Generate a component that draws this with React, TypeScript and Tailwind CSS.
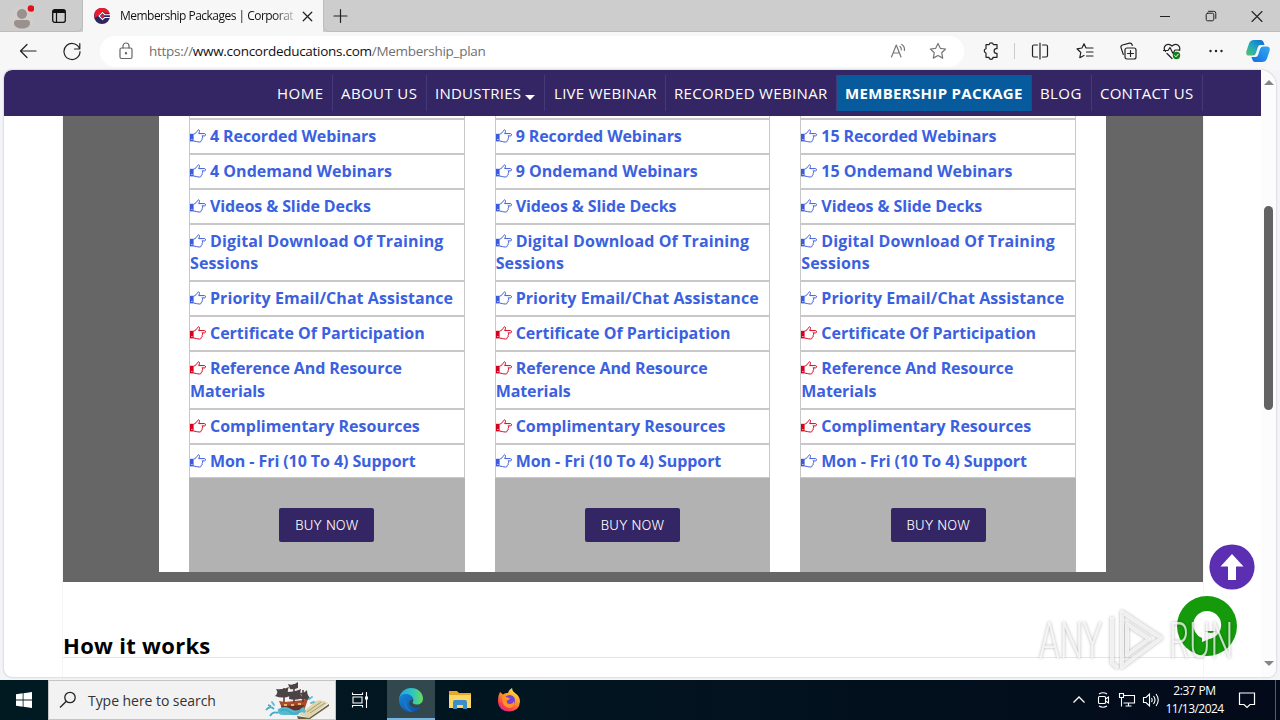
import type { ReactNode } from "react";

const navItems = [
  { label: "HOME", box: "w-[65px] pl-[9px] tracking-[0.5px]" },
  { label: "ABOUT US", box: "w-[94px] pl-2 tracking-[0.4px]" },
  { label: "INDUSTRIES", box: "w-[118px] pl-2 tracking-[0.25px]", caret: true },
  { label: "LIVE WEBINAR", box: "w-[121px] pl-[9px] tracking-[0.3px]" },
  { label: "RECORDED WEBINAR", box: "w-[171px] pl-2 tracking-[0.35px]" },
  { label: "MEMBERSHIP PACKAGE", box: "w-[195px] pl-2 tracking-[0.32px]", active: true },
  { label: "BLOG", box: "w-[60px] pl-[8px] tracking-[0.4px]" },
  { label: "CONTACT US", box: "w-[111px] pl-2 tracking-[0.25px]" },
];

const plans = [4, 9, 15];

const featuresFor = (count: number) => [
  { text: `${count} Recorded Webinars`, red: false, spacing: "tracking-[-0.1px]" },
  { text: `${count} Ondemand Webinars`, red: false, spacing: "tracking-[0.02px]" },
  { text: "Videos & Slide Decks", red: false, spacing: "tracking-[-0.1px]" },
  { text: "Digital Download Of Training Sessions", red: false, spacing: "tracking-[0.12px]" },
  { text: "Priority Email/Chat Assistance", red: false, spacing: "tracking-[0.06px]" },
  { text: "Certificate Of Participation", red: true, spacing: "tracking-[-0.02px]" },
  { text: "Reference And Resource Materials", red: true, spacing: "tracking-[-0.09px]" },
  { text: "Complimentary Resources", red: true, spacing: "tracking-[0px]" },
  { text: "Mon - Fri (10 To 4) Support", red: false, spacing: "tracking-[-0.08px]" },
];

function Hand({ red }: { red: boolean }) {
  return (
    <svg
      viewBox="0 0 16 14"
      className={`mr-1 inline-block h-[14px] w-4 align-[-1px] ${red ? "text-[#d5001c]" : "text-[#3c5bdc]"}`}
      fill="none"
      stroke="currentColor"
      strokeWidth="1"
      strokeLinejoin="round"
    >
      <rect x="0" y="4.8" width="3.6" height="7.6" fill="currentColor" stroke="none" />
      <path d="M3.5 5.2 C5.5 4.8 6.6 3.2 7.6 1.5 C8.5 .2 9.8 1 9.5 2.5 L8.7 4.6 H14.6 C15.8 4.6 15.8 6.9 14.6 6.9 H11.9 C13 7.5 12.8 9 12 9.3 C12.6 10.3 12 11.2 11.2 11.4 C11.4 12.6 10.5 13 9.5 13 C7 13 5.6 12.2 3.5 12" />
      <rect x="1.4" y="10" width="1" height="1" fill="#fff" stroke="none" />
    </svg>
  );
}

function Icon({ children, className = "h-5 w-5", color = "#222" }: { children: ReactNode; className?: string; color?: string }) {
  return (
    <svg viewBox="0 0 20 20" className={`shrink-0 ${className}`} fill="none" stroke={color} strokeWidth="1.2" strokeLinecap="round" strokeLinejoin="round">
      {children}
    </svg>
  );
}

function TabStrip() {
  return (
    <div className="flex h-8 bg-[#cdcdcd]">
      <div className="flex w-[83px] items-center rounded-br-md border-r border-b border-[#bcbcbc]">
        <svg viewBox="0 0 24 28" className="ml-[10px] h-7 w-6 shrink-0">
          <circle cx="12" cy="15" r="12" fill="#d1cecc" />
          <circle cx="12" cy="12" r="5" fill="#99918d" />
          <path d="M4 21q0-3 3-3h10q3 0 3 3c0 4-4 5.500-8 5.500S4 25 4 21z" fill="#99918d" />
          <circle cx="21" cy="6.500" r="3.300" fill="#e0101c" />
        </svg>
        <svg viewBox="0 0 14 14" className="ml-[18px] h-[14px] w-[14px] shrink-0" fill="none" stroke="#111">
          <rect x=".7" y=".7" width="12.6" height="12.6" rx="2" strokeWidth="1.3" />
          <path d="M1 2.5h12" strokeWidth="3" />
          <path d="M4.5 3v10" strokeWidth="1.2" />
        </svg>
      </div>
      <div className="flex w-60 items-center bg-[#f7f7f7] pl-[11px]">
        <svg viewBox="0 0 16 16" className="h-4 w-4 shrink-0">
          <circle cx="8" cy="8" r="8" fill="#302560" />
          <path d="M.6 5A8 8 0 0 1 15.600 5.300H11.500L8.500 3.200 4 8 .3 10z" fill="#ec1b2e" />
          <path d="M16 6.300H11.200L8.500 3.700 4.300 8l4.200 4.300 2.500-2.300H15.700L15.900 9H10.400L8.500 10.800 5.900 8l2.600-2.700 1.900 1.900H16z" fill="#fff" />
          <circle cx="8.600" cy="8" r="1.700" fill="#ec1b2e" />
        </svg>
        <div className="ml-[10px] w-[179px] whitespace-nowrap text-[12px] tracking-[-0.52px] text-[#111] [mask-image:linear-gradient(90deg,#000_86%,transparent)]">
          Membership Packages | Corporat
        </div>
        <Icon className="h-[17px] w-[17px]"><path d="M5 5l10 10M15 5L5 15" strokeWidth="1.5" /></Icon>
      </div>
      <div className="flex flex-1 items-center rounded-bl-md border-b border-l border-[#bcbcbc]">
        <Icon className="ml-[7px] h-5 w-5"><path d="M9.500 3.500v13M3 10h13" /></Icon>
        <div className="ml-auto flex">
          <div className="flex w-[46px] justify-center"><Icon className="h-5 w-5"><path d="M5 10.5h10" strokeLinecap="butt" strokeWidth="1" /></Icon></div>
          <div className="flex w-[46px] justify-center"><Icon><rect x="5.2" y="7.2" width="7.6" height="7.6" rx="1.5" strokeWidth="1" /><path d="M7.5 5.3h5.3q2 0 2 2v5.2" strokeWidth="1" /></Icon></div>
          <div className="flex w-[46px] justify-center"><Icon><path d="M5 5.5l10 10M15 5.5l-10 10" strokeWidth="1.1" /></Icon></div>
        </div>
      </div>
    </div>
  );
}

function Toolbar() {
  return (
    <div className="flex h-[38px] items-center bg-[#f7f7f7]">
      <Icon className="ml-[18px] h-5 w-5"><path d="M18 10H2.5M9 3.5L2.5 10 9 16.5" /></Icon>
      <Icon className="ml-[24px] h-5 w-5"><path d="M17.6 8A8 8 0 1 0 18 10.5M17.8 2.5V8H12.5" /></Icon>
      <div className="ml-[18px] flex h-[31px] w-[864px] items-center rounded-full bg-white pl-4">
        <Icon color="#666"><rect x="4" y="7" width="12" height="10.5" rx="1.5" /><path d="M7 7V5a3 3 0 0 1 6 0v2" /><circle cx="10" cy="12.2" r=".6" fill="#666" /></Icon>
        <div className="ml-[13px] whitespace-nowrap text-[13.500px] tracking-[-0.28px] text-[#707070]">
          https://<span className="text-[#111]">www.concordeducations.com</span>/Membership_plan
        </div>
        <Icon className="mr-[19px] ml-auto h-5 w-5" color="#777"><path d="M2.5 16L7.3 4 12 16M4.2 12h6.4M11 5.5q1.7 1.6 1.3 3.5M12.7 3.5Q16 5.5 15.4 9.5" /></Icon>
        <Icon className="mr-4 h-5 w-5" color="#777"><path d="M10 2.4l2.3 4.9 5.3.7-3.9 3.7 1 5.4-4.7-2.6-4.7 2.6 1-5.4L2.4 8l5.3-.7z" /></Icon>
      </div>
      <Icon className="ml-[17px] h-5 w-5"><path d="M5 3.7h3.1a2.2 2.2 0 0 1 4.300 0H16v4h-.6a2.200 2.200 0 1 0 0 4.600h.6v4h-4a2 2 0 0 1-4 0H5v-4.300a2.200 2.200 0 0 1 0-4.300z" /></Icon>
      <div className="ml-[13px] h-4 w-px bg-[#ccc]" />
      <Icon className="ml-[15px] h-5 w-5"><path d="M10 2v16M7.5 4H4q-1.5 0-1.5 1.5v9Q2.5 16 4 16h3.5M12.5 4H16q1.5 0 1.5 1.5v9q0 1.5-1.5 1.5h-3.5" /></Icon>
      <Icon className="ml-[25px] h-5 w-5"><path d="M12.5 7H11L9 2.8 7 7 2 7.8l3.8 3.7-1 5.2L9 14.5M12.5 7H18M11.5 11H18M11.5 15H18" /></Icon>
      <Icon className="ml-[23px] h-5 w-5"><rect x="7" y="7" width="11" height="11" rx="2" /><path d="M12.5 9.5v6M9.5 12.5h6M5.3 13.5L3 6.6q-.5-2 1.5-2.6l7-1.8q2-.4 2.6 1.5l.2.8" /></Icon>
      <Icon className="ml-[24px] h-5 w-5"><path d="M3.5 10.5Q.8 7 3.7 4.2 7 2 10 5q3-3 6.2-.8 2.6 2.4.9 5.3M5 12.5l5 5M1.5 9.5H6l2-3 3 6 2-3.5h5" /><circle cx="14.5" cy="14.5" r="3.7" fill="#14801c" stroke="none" /><path d="M12.8 14.6l1.2 1.2 2.2-2.5" stroke="#fff" strokeWidth="1" /></Icon>
      <Icon className="ml-[24px] h-5 w-5"><g fill="#222" stroke="none"><circle cx="4.5" cy="10" r="1.2" /><circle cx="10" cy="10" r="1.2" /><circle cx="15.5" cy="10" r="1.2" /></g></Icon>
      <svg viewBox="0 0 24 24" className="ml-5 h-6 w-6">
        <defs>
          <linearGradient id="copilotLeft" x1="0" y1="1" x2="1" y2="0"><stop stopColor="#58c45d" /><stop offset=".45" stopColor="#23aabe" /><stop offset="1" stopColor="#1166dd" /></linearGradient>
          <linearGradient id="copilotRight" x1="0" y1="1" x2="1" y2="0"><stop stopColor="#126fe0" /><stop offset="1" stopColor="#35a8f5" /></linearGradient>
        </defs>
        <path d="M8 1h7q2 0 2.700 2.500L18.500 6h-4q-2 0-2.700 2.300L10 14q-.8 2.500-3 2.500H3q-3.300 0-2.700-4L3 4.500Q4.200 1 8 1z" fill="url(#copilotLeft)" />
        <path d="M16 23H9q-2 0-2.700-2.500L5.500 18h4q2 0 2.700-2.300L14 10q.8-2.500 3-2.500h4q3.300 0 2.700 4L21 19.500Q19.800 23 16 23z" fill="url(#copilotRight)" />
      </svg>
    </div>
  );
}

function SiteNav() {
  return (
    <nav className="flex h-[46px] items-center rounded-tl-lg bg-[#342664] pl-[264px] text-[15px] text-white">
      {navItems.map((item) => (
        <div
          key={item.label}
          className={`flex h-9 shrink-0 items-center whitespace-nowrap border-r border-[#46397a] pt-px ${item.box} ${item.active ? "bg-[#075b9d] font-bold" : ""}`}
        >
          {item.label}
          {item.caret && <span className="mt-[7px] ml-1 border-x-[5px] border-t-[5px] border-x-transparent border-t-white" />}
        </div>
      ))}
    </nav>
  );
}

function Plan({ count }: { count: number }) {
  return (
    <div className="flex flex-col">
      <div className="h-[3px] shrink-0 border-x border-b border-[#c8c8c8]" />
      {featuresFor(count).map((f) => (
        <div key={f.text} className={`shrink-0 border border-[#c8c8c8] py-[5px] text-[16px] leading-[22.857px] font-bold text-[#3b61df] ${f.spacing}`}>
          <Hand red={f.red} />
          {f.text}
        </div>
      ))}
      <div className="flex flex-1 justify-center bg-[#b2b2b2] pt-[30px]">
        <div className="flex h-[34px] w-[95px] items-center justify-center rounded-[2px] bg-[#342664] [font-family:Inter,sans-serif] text-[13px] font-light tracking-[0.1px] text-white">
          BUY NOW
        </div>
      </div>
    </div>
  );
}

function Watermark() {
  return (
    <div className="absolute top-[538px] left-[1035px] flex h-[66px] w-[194px] items-center text-white/75 [filter:drop-shadow(0_0_1.5px_rgba(0,0,0,0.4))]">
      <div className="w-[70px] shrink-0 origin-left scale-x-[0.66] [font-family:Roboto,sans-serif] text-[50px] leading-none font-light">ANY</div>
      <svg viewBox="0 0 56 64" className="h-16 w-14 shrink-0" fill="none" stroke="currentColor" strokeWidth="4" strokeLinejoin="round">
        <path d="M3 8v46l6 5M13 3l39 26-39 29zM18 15l22 15-22 16z" />
      </svg>
      <div className="ml-1 w-[64px] shrink-0 origin-left scale-x-[0.64] [font-family:Roboto,sans-serif] text-[50px] leading-none font-light">RUN</div>
    </div>
  );
}

function Page() {
  return (
    <div className="relative mx-1 flex h-[607px] overflow-hidden rounded-lg rounded-tr-2xl bg-white shadow-[0_0_2px_#aaa]">
      <div className="flex w-[1257px] flex-col">
        <SiteNav />
        <main className="ml-[58px] flex w-[1142px] flex-1 flex-col border-x border-[#f5f5f5]">
          <section className="flex h-[466px] w-[1140px] shrink-0 justify-center bg-[#666] pr-px pb-[10px]">
            <div className="grid w-[947px] grid-cols-3 gap-[30px] bg-white px-[30px]">
              {plans.map((count) => <Plan key={count} count={count} />)}
            </div>
          </section>
          <h2 className="mt-[46px] h-[30px] border-b border-[#e5e5e5] text-[22px] leading-[34px] font-bold tracking-[0.3px] text-black">How it works</h2>
        </main>
      </div>
      <div className="flex w-[15px] flex-col items-center bg-[#fcfcfc] pt-[10px] pb-[11px]">
        <div className="border-x-[5px] border-b-[5px] border-x-transparent border-b-[#858585]" />
        <div className="mt-[121px] h-[204px] w-[9px] rounded-full bg-[#626262]" />
        <div className="mt-auto border-x-[5px] border-t-[5px] border-x-transparent border-t-[#858585]" />
      </div>
      <svg viewBox="0 0 46 46" className="absolute top-[474px] left-[1205px] h-[46px] w-[46px]">
        <circle cx="23" cy="23" r="22.600" fill="#5c2fb2" />
        <path d="M23 10L34.500 22.500H27V36H19V22.500H11.500z" fill="#fff" />
      </svg>
      <svg viewBox="0 0 60 60" className="absolute top-[526px] left-[1173px] h-[60px] w-[60px]">
        <circle cx="30" cy="30" r="30" fill="#149a0b" />
        <path d="M30 15a14 14 0 0 1 3 27.700L25 46v-4A14 14 0 0 1 30 15z" fill="#fff" />
        <path d="M28 35h11q-5 4-11 0z" fill="#149a0b" />
      </svg>
      <Watermark />
    </div>
  );
}

function Ship() {
  return (
    <svg viewBox="0 0 66 38" className="h-[38px] w-[66px]">
      <path d="M35 34L52 20Q57 18 64 22L45 37z" fill="#e0d4ab" />
      <path d="M33 35l12 2 20-14v2L46 38H34z" fill="#6b6041" />
      <path d="M46 32l15-10M43 31l14-10" stroke="#a69b76" />
      <path d="M15 20l6 1 19-2 5-4-5 15q-11 5-21 0z" fill="#a94a2d" />
      <path d="M17 25l23-1-2 6q-11 4-19 0z" fill="#663024" />
      <path d="M20 23h3v2h-3zM27 23h3v2h-3zM34 22h3v2h-3z" fill="#e8b36a" />
      <path d="M20 7v14M30 3v18M39 9v12" stroke="#4d3830" strokeWidth="1.5" />
      <path d="M12 8q7 1 13-2-3 5 1 9-7 3-15 0 4-3 1-7zM23 11q8 0 14-3-2 5 2 9-7 3-14 1 1-4-2-7zM36 12q5 0 7-3 0 6 4 9-6 1-10 0 2-3-1-6zM24 3q5 2 10-2v6q-5 2-8 1z" fill="#4b4344" />
      <path d="M14 28q7-4 13 0t12-2q4 3 2 6-5-2-7 2H20q-8 0-6-6z" fill="#58b9cf" />
      <path d="M16 30q6-3 10 1t10-1M2 29q4-5 8-1M6 35q3-5 8-3M4 24l3 1" stroke="#45abc9" strokeWidth="1.8" fill="none" />
      <path d="M45 18l3-2M47 22l3-1M10 24l-2-3" stroke="#61bfdb" strokeWidth="2" strokeLinecap="round" />
    </svg>
  );
}

function Taskbar() {
  return (
    <div className="flex h-10 bg-linear-to-r from-[#001a22] via-[#021420] to-[#030a1a] text-white">
      <div className="flex w-12 items-center justify-center">
        <svg viewBox="0 0 16 16" className="h-4 w-4" fill="#fff"><path d="M0 2.200L6.700 1.300V7.600H0zM7.500 1.200L16 0V7.600H7.500zM0 8.400H6.700V14.700L0 13.800zM7.500 8.400H16V16L7.500 14.800z" /></svg>
      </div>
      <div className="flex w-72 items-center border border-[#c5c5c5] bg-[#f2f2f2] pl-[10px]">
        <svg viewBox="0 0 18 18" className="h-[18px] w-[18px]" fill="none" stroke="#222" strokeWidth="1.300"><circle cx="11" cy="6.500" r="5.200" /><path d="M7.300 10.200L1 16.500" /></svg>
        <div className="ml-[11px] whitespace-nowrap text-[14px] tracking-[-0.05px] text-[#333]">Type here to search</div>
        <div className="mr-[5px] ml-auto"><Ship /></div>
      </div>
      <div className="flex w-[51px] items-center justify-center pr-1">
        <svg viewBox="0 0 18 18" className="h-[18px] w-[18px]" fill="none" stroke="#fff" strokeWidth="1.100">
          <path d="M1.500 1.500v2h10v-2M1.500 16.500v-2h10v2M2 6h9v6H2zM15.500 1v16" /><path d="M14 5.500h3v3h-3z" fill="#fff" stroke="none" />
        </svg>
      </div>
      <div className="flex w-12 items-center justify-center border-b-2 border-[#76b4e4] bg-[#33474f] pt-px">
        <svg viewBox="0 0 24 24" className="h-6 w-6">
          <defs>
            <linearGradient id="edgeTop"><stop stopColor="#22a4e2" /><stop offset=".55" stopColor="#30c4c4" /><stop offset="1" stopColor="#6bdc57" /></linearGradient>
            <linearGradient id="edgeBottom" x1="0" y1="0" x2="1" y2="1"><stop stopColor="#1787d9" /><stop offset="1" stopColor="#0c4a99" /></linearGradient>
          </defs>
          <path d="M0 11C1 4 6 0 12 0c7 0 12 5 12 10.500 0 4-3 6-6 6s-5-1.200-4.200-2.500c2-3-.8-6-5-6C5 8 1.500 9 0 11z" fill="url(#edgeTop)" />
          <path d="M0 12C0 7 4.500 5.500 8 6c4 .5 6.500 3.500 6 6-4-1-6 5 0 7.500 3.500 1.300 7-.5 8.500-1C20 22 16.500 24 12 24 5 24 0 18.500 0 12z" fill="url(#edgeBottom)" />
          <path d="M8.500 10C6 14 8 21 14 23.800 5 24 2 13 8.500 10z" fill="#1b75c9" />
        </svg>
      </div>
      <div className="flex w-[49px] items-center justify-center">
        <svg viewBox="0 0 22 18" className="h-[18px] w-[22px]"><path d="M0 0h8l2 2h12v15H0z" fill="#e9a825" /><path d="M0 4h22v13H0z" fill="#fcd765" /><path d="M4 18v-7q0-2 2-2h10q2 0 2 2v7h-4v-4H8v4z" fill="#3c8ecb" /></svg>
      </div>
      <div className="flex w-[49px] items-center justify-center">
        <svg viewBox="0 0 24 24" className="h-6 w-6">
          <defs><linearGradient id="foxBody" x1=".8" y1="0" x2=".2" y2="1"><stop stopColor="#fff04b" /><stop offset=".45" stopColor="#ff9225" /><stop offset=".8" stopColor="#fc3655" /><stop offset="1" stopColor="#d52aa0" /></linearGradient></defs>
          <path d="M3 4l3 2.500Q8 4.500 11 5q1-3.500 4-5 0 3 3 5 5 3.500 5 8.500Q22.500 23 12 23.500 2 23 1 14q-.3-6 2-10z" fill="url(#foxBody)" />
          <circle cx="12.500" cy="12.500" r="5.500" fill="#7542d5" />
          <path d="M5 9q3-1.500 5 .5l3 .5q-.5 2-3 2.500-1 3 2 3.500 4 .3 5-3 1 6-4.500 7Q5 20 5 9z" fill="#ff9326" />
        </svg>
      </div>
      <div className="ml-auto flex items-center">
        <svg viewBox="0 0 14 14" className="h-[14px] w-[14px]" fill="none" stroke="#fff" strokeWidth="1.300"><path d="M1.500 9.500L7 4l5.500 5.500" /></svg>
        <svg viewBox="0 0 14 18" className="ml-[10px] h-[18px] w-[14px]" fill="none" stroke="#fff" strokeWidth="1.100"><rect x="2.500" y="5.500" width="7" height="7" rx="1" /><path d="M9.500 8L12.500 6v6l-3-2M3 3Q7 .5 11 3M3 15q4 2.500 8 0" /></svg>
        <svg viewBox="0 0 18 16" className="ml-[8px] h-4 w-[18px]" fill="none" stroke="#fff" strokeWidth="1.100"><path d="M6 3.500h10.500v7.500H5.500M1.500 1.500h4v4h-4zM3.500 5.500v9M7.500 14h6M10.500 11v3" /></svg>
        <svg viewBox="0 0 18 16" className="ml-[6px] h-4 w-[18px]" fill="none" stroke="#fff" strokeWidth="1.100"><path d="M1.500 5.500h2.500L7.500 2v12L4 10.500H1.500zM9.500 6q1.300 2 0 4M11.500 4q3 4 0 8M14 2q4.500 6 0 12" /></svg>
        <div className="ml-[4px] w-[61px] text-center text-[12px] leading-[18px] whitespace-nowrap"><div className="tracking-[-0.35px]">2:37 PM</div><div className="tracking-[-0.55px]">11/13/2024</div></div>
        <svg viewBox="0 0 18 18" className="ml-[13px] h-[18px] w-[18px]" fill="none" stroke="#fff" strokeWidth="1.200"><path d="M1.500 2h15v11.500h-4.500L9 16.500l-3-3H1.500z" /></svg>
        <div className="ml-[19px] h-10 w-[5px] border-l border-[#565c68]" />
      </div>
    </div>
  );
}

export default function App() {
  return (
    <div className="flex h-[720px] w-[1280px] flex-col overflow-hidden bg-[#f3f4f7] font-['Open_Sans',sans-serif]">
      <TabStrip />
      <Toolbar />
      <Page />
      <div className="h-[3px] shrink-0" />
      <Taskbar />
    </div>
  );
}
